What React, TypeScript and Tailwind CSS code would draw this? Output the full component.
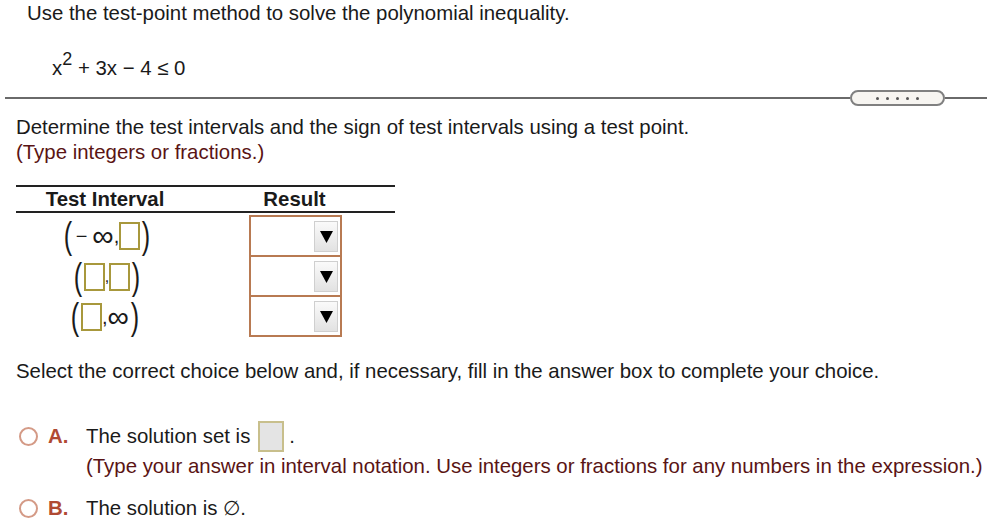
import React from 'react';

const font = { fontFamily: '"Liberation Sans", Arial, sans-serif' };

function Box({ className = '' }: { className?: string }) {
  return <span className={`inline-block h-[28px] w-[21px] border-2 border-[#a8983c] bg-white align-middle ${className}`} />;
}

function Paren({ side }: { side: 'l' | 'r' }) {
  return (
    <span className="inline-block align-middle text-[36px] font-light leading-none" style={{ transform: 'scaleX(0.7)' }}>
      {side === 'l' ? '(' : ')'}
    </span>
  );
}

function Inf() {
  return <span className="text-[30px] leading-none">∞</span>;
}

function Dropdown() {
  return (
    <div className="-mt-[2px] flex h-[42px] w-[93px] items-center justify-end border-2 border-[#b87a52] bg-white pr-[2px] first:mt-0">
      <div className="flex h-[31px] w-[24px] items-center justify-center border border-[#cfcfcf] bg-gradient-to-b from-[#fafafa] to-[#e2e2e2]">
        <svg width="13" height="13" viewBox="0 0 13 13">
          <polygon points="0,1 13,1 6.5,13" fill="#000" />
        </svg>
      </div>
    </div>
  );
}

function Radio() {
  return <span className="inline-block h-[19px] w-[19px] shrink-0 rounded-full border-2 border-[#d49a86] bg-white" />;
}

export default function App() {
  return (
    <div className="h-[523px] w-[987px] overflow-hidden bg-white text-[20.4px] text-[#1a1a1a]" style={font}>
      <p className="pl-[27px] pt-[1px] leading-[24px]">Use the test-point method to solve the polynomial inequality.</p>

      <p className="mt-[31px] h-[24px] pl-[52px] leading-[24px]">
        x<sup className="relative -top-[10px] text-[18px] leading-none">2</sup> + 3x − 4 ≤ 0
      </p>

      <div className="mt-[10px] flex items-center pl-[5px]">
        <div className="h-[2px] flex-1 bg-[#6a6a6a]" />
        <div className="flex h-[16px] w-[95px] items-center justify-center gap-[7px] rounded-full border-2 border-[#808080] bg-[#f7f5f1]">
          {[0, 1, 2, 3, 4].map((i) => (
            <span key={i} className="h-[3px] w-[3px] rounded-full bg-[#555]" />
          ))}
        </div>
        <div className="h-[2px] w-[42px] bg-[#6a6a6a]" />
      </div>

      <p className="mt-[9px] pl-[16px] leading-[25px]">Determine the test intervals and the sign of test intervals using a test point.</p>
      <p className="pl-[16px] leading-[25px] text-[#5a1414]">(Type integers or fractions.)</p>

      <div className="ml-[16px] mt-[20px] w-[379px]">
        <div className="flex h-[28px] items-center border-y-2 border-[#222] font-bold">
          <div className="w-[178px] text-center">Test Interval</div>
          <div className="flex-1 text-center">Result</div>
        </div>
        <div className="flex pt-[2px]">
          <div className="flex w-[178px] flex-col items-center text-[20px]">
            <div className="flex h-[42px] items-center pl-[4px]">
              <Paren side="l" />
              <span className="ml-[2px] mr-[5px]">−</span>
              <Inf />
              <span>,</span>
              <Box />
              <Paren side="r" />
            </div>
            <div className="flex h-[40px] items-center pl-[4px]">
              <Paren side="l" />
              <Box />
              <span className="text-[16px]">,</span>
              <Box />
              <Paren side="r" />
            </div>
            <div className="flex h-[40px] items-center">
              <Paren side="l" />
              <Box />
              <span>,</span>
              <Inf />
              <Paren side="r" />
            </div>
          </div>
          <div className="flex flex-1 flex-col pl-[55px]">
            <Dropdown />
            <Dropdown />
            <Dropdown />
          </div>
        </div>
      </div>

      <p className="mt-[22px] pl-[16px] leading-[24px]">Select the correct choice below and, if necessary, fill in the answer box to complete your choice.</p>

      <div className="mt-[39px] flex items-start pl-[19px]">
        <div className="flex w-[67px] items-center gap-[10px] pt-[4px]">
          <Radio />
          <span className="font-bold leading-[20px] text-[#b04a33]">A.</span>
        </div>
        <div>
          <div className="flex h-[28px] items-center">
            <span>The solution set is</span>
            <span className="ml-[8px] inline-block h-[31px] w-[26px] border-2 border-[#c8bf8c] bg-[#e4e4e4]" />
            <span className="ml-[5px]">.</span>
          </div>
          <p className="mt-[4px] whitespace-nowrap leading-[24px] text-[#5a1414]">
            (Type your answer in interval notation. Use integers or fractions for any numbers in the expression.)
          </p>
        </div>
      </div>

      <div className="mt-[15px] flex items-center pl-[19px]">
        <div className="flex w-[67px] items-center gap-[10px]">
          <Radio />
          <span className="font-bold text-[#b04a33]">B.</span>
        </div>
        <span className="leading-[24px]">The solution is ∅.</span>
      </div>
    </div>
  );
}
